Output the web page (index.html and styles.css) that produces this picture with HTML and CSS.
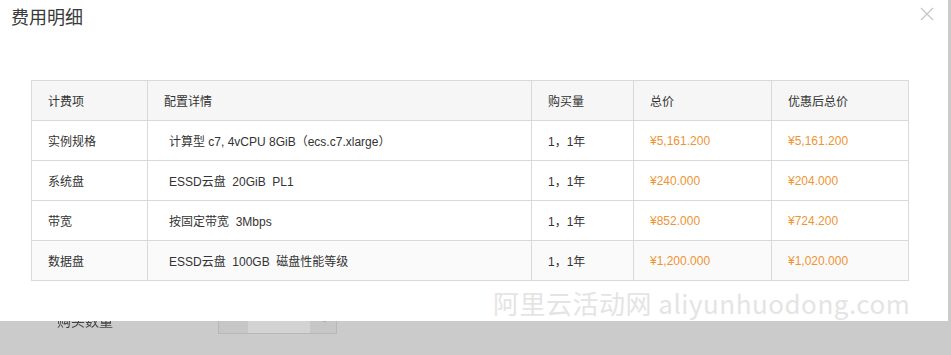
FILE: index.html
```html
<!DOCTYPE html>
<html lang="zh-CN">
<head>
<meta charset="utf-8">
<title>费用明细</title>
<link rel="stylesheet" href="styles.css">
</head>
<body>
<div class="modal">
  <div class="modal-head">
    <h2 class="modal-title">费用明细</h2>
    <svg class="close" width="14" height="14" viewBox="0 0 14 14"><path d="M1 1 L13 13 M13 1 L1 13" stroke="#c4c4c4" stroke-width="1.2" fill="none"/></svg>
  </div>
  <table class="fee-table">
    <colgroup>
      <col class="c1"><col class="c2"><col class="c3"><col class="c4"><col class="c5">
    </colgroup>
    <thead>
      <tr><th>计费项</th><th>配置详情</th><th>购买量</th><th>总价</th><th>优惠后总价</th></tr>
    </thead>
    <tbody>
      <tr><td>实例规格</td><td class="detail">计算型 c7, 4vCPU 8GiB（ecs.c7.xlarge）</td><td>1，1年</td><td class="price">¥5,161.200</td><td class="price">¥5,161.200</td></tr>
      <tr><td>系统盘</td><td class="detail">ESSD云盘&nbsp; 20GiB&nbsp; PL1</td><td>1，1年</td><td class="price">¥240.000</td><td class="price">¥204.000</td></tr>
      <tr><td>带宽</td><td class="detail">按固定带宽&nbsp; 3Mbps</td><td>1，1年</td><td class="price">¥852.000</td><td class="price">¥724.200</td></tr>
      <tr class="hover"><td>数据盘</td><td class="detail">ESSD云盘&nbsp; 100GB&nbsp; 磁盘性能等级</td><td>1，1年</td><td class="price">¥1,200.000</td><td class="price">¥1,020.000</td></tr>
    </tbody>
  </table>
  <div class="watermark">阿里云活动网 aliyunhuodong.com</div>
</div>
<div class="under">
  <div class="under-row">
    <span class="under-label">购买数量</span>
    <span class="under-input"><span class="under-caret">ˆ</span></span>
  </div>
</div>
</body>
</html>
```

FILE: styles.css
```css
html, body {
  margin: 0;
  padding: 0;
}
body {
  width: 951px;
  height: 355px;
  overflow: hidden;
  background: #cbcbcb;
  font-family: "Liberation Sans", "Noto Sans CJK SC", sans-serif;
  color: #333;
}
.modal {
  width: 948px;
  height: 321px;
  background: #fff;
  box-sizing: border-box;
  overflow: hidden;
}
.modal-head {
  display: flex;
  justify-content: space-between;
  align-items: flex-start;
  height: 80px;
  padding: 0 14px 0 11px;
  box-sizing: border-box;
}
.modal-title {
  margin: 0;
  padding-top: 4px;
  font-family: "Noto Sans CJK SC", sans-serif;
  font-weight: 400;
  font-size: 18px;
  line-height: 24px;
  color: #3a3a3a;
}
.close {
  margin-top: 7px;
}
.fee-table {
  margin-left: 31px;
  width: 877px;
  border-collapse: collapse;
  table-layout: fixed;
  font-size: 12px;
}
.c1 { width: 116px; }
.c2 { width: 384px; }
.c3 { width: 102px; }
.c4 { width: 138px; }
.c5 { width: 137px; }
.fee-table th,
.fee-table td {
  border: 1px solid #d9d9d9;
  height: 39px;
  padding: 0 0 0 16px;
  text-align: left;
  vertical-align: middle;
  font-weight: 400;
  color: #333;
  white-space: nowrap;
}
.fee-table th {
  background: #f6f6f6;
}
.fee-table td.detail {
  padding-left: 21px;
}
.fee-table td.price {
  color: #ef9433;
}
.fee-table tr.hover td {
  background: #fafafa;
}
.watermark {
  margin: 7px 0 0 493px;
  font-family: "Noto Sans CJK SC", sans-serif;
  font-size: 26px;
  line-height: 30px;
  color: #e4e4e4;
  white-space: nowrap;
  letter-spacing: 0.5px;
}
.under {
  height: 34px;
  overflow: hidden;
}
.under-row {
  display: flex;
  align-items: flex-start;
  margin-top: -9px;
}
.under-label {
  margin-left: 57px;
  font-family: "Noto Sans CJK SC", sans-serif;
  font-size: 14px;
  line-height: 16px;
  color: #444;
  filter: blur(0.4px);
}
.under-input {
  margin-left: 105px;
  margin-top: 9px;
  width: 119px;
  height: 13px;
  box-sizing: border-box;
  border: 1px solid #b8b8b8;
  border-top: none;
  background: linear-gradient(to right, #c6c6c6 0 25%, #d3d3d3 25% 78%, #c6c6c6 78%);
  display: flex;
  justify-content: flex-end;
  padding-right: 10px;
}
.under-caret {
  font-size: 10px;
  line-height: 10px;
  color: #999;
}
```
